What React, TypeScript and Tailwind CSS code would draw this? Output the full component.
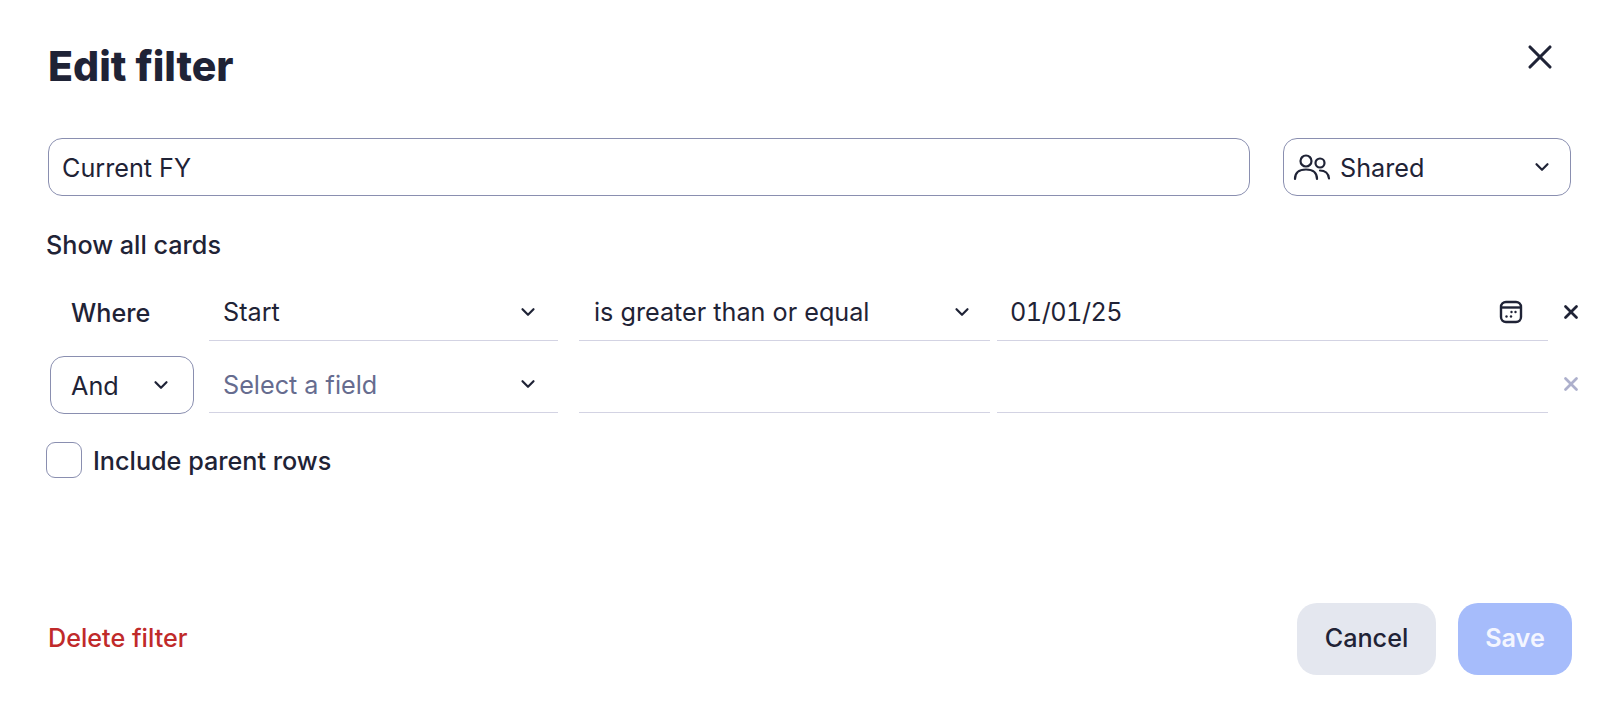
import { ChevronDown, X } from 'lucide-react'

function Chevron({ className = '' }: { className?: string }) {
  return <ChevronDown className={`w-[22px] h-[22px] text-[#1f2336] ${className}`} strokeWidth={2.4} />
}

function UsersIcon() {
  return (
    <svg className="w-[38px] h-[30px] text-[#1f2336]" viewBox="0 0 38 30" fill="none" stroke="currentColor" strokeWidth="2.200" strokeLinecap="round">
      <circle cx="13" cy="9" r="5.500" />
      <circle cx="27" cy="11" r="4.500" />
      <path d="M2 27c0-6 4-9.500 11-9.500s11 3.500 11 9.500" />
      <path d="M27 18.500c5 0 8.500 3 9 8" />
    </svg>
  )
}

function CalendarIcon() {
  return (
    <svg className="w-[24px] h-[24px] text-[#1f2336]" viewBox="0 0 24 24" fill="none" stroke="currentColor">
      <rect x="2" y="2" width="20" height="20" rx="5" strokeWidth="2.400" />
      <path d="M2 7.500h20" strokeWidth="2.400" />
      <g fill="currentColor" stroke="none">
        <circle cx="12.500" cy="12" r="1.200" />
        <circle cx="16.500" cy="12" r="1.200" />
        <circle cx="7.500" cy="16.500" r="1.200" />
        <circle cx="12" cy="16.500" r="1.200" />
      </g>
    </svg>
  )
}

function Underlined({ className, children }: { className: string; children?: React.ReactNode }) {
  return (
    <div className={`h-[58px] shrink-0 flex items-center justify-between border-b border-[#d3d3e3] text-[25.2px] leading-[32px] ${className}`}>
      {children}
    </div>
  )
}

export default function App() {
  return (
    <div className="w-[1612px] h-[704px] overflow-hidden bg-white flex flex-col pl-[48px] pr-[40px] pt-[36px] pb-[29px] text-[#1f2336] font-['Inter',sans-serif]">
      {/* Header */}
      <div className="h-[60px] flex items-center justify-between">
        <h1 className="text-[41px] leading-[60px] font-extrabold">Edit filter</h1>
        <X className="w-[40px] h-[40px] -mt-[18px] mr-[12px]" strokeWidth={1.9} />
      </div>

      {/* Name + visibility */}
      <div className="mt-[42px] flex gap-[33px]">
        <div className="w-[1202px] h-[58px] border border-[#8a8fb0] rounded-[14px] flex items-center px-[13px] pt-[1px] text-[25.2px] leading-[32px]">
          Current FY
        </div>
        <div className="w-[288px] h-[58px] border border-[#8a8fb0] rounded-[14px] flex items-center pl-[9px] pr-[17px] text-[25.2px] leading-[32px]">
          <UsersIcon />
          <span className="ml-[9px] flex-1 pt-[1px]">Shared</span>
          <Chevron />
        </div>
      </div>

      <div className="mt-[33px] -ml-[2px] text-[25.2px] leading-[32px] font-medium">Show all cards</div>

      {/* Rows */}
      <div className="mt-[22px] flex flex-col gap-[15px]">
        <div className="flex items-center">
          <div className="w-[144px] shrink-0 ml-[2px] pl-[21px] pt-[1px] text-[25.2px] leading-[32px] font-medium">Where</div>
          <Underlined className="w-[349px] ml-[15px] pl-[14px] pr-[19px]">
            <span className="pt-[1px]">Start</span>
            <Chevron />
          </Underlined>
          <Underlined className="w-[411px] ml-[21px] pl-[15px] pr-[17px]">
            <span className="pt-[1px]">is greater than or equal</span>
            <Chevron />
          </Underlined>
          <Underlined className="w-[551px] ml-[7px] pl-[13px] pr-[25px]">
            <span className="pt-[1px] tabular-nums tracking-[-0.5px]">01/01/25</span>
            <CalendarIcon />
          </Underlined>
          <X className="w-[22px] h-[22px] shrink-0 ml-[12px]" strokeWidth={3} />
        </div>
        <div className="flex items-start">
          <div className="w-[144px] shrink-0 h-[58px] ml-[2px] border border-[#8a8fb0] rounded-[14px] flex items-center justify-between pl-[20px] pr-[21px] text-[25.2px] leading-[32px]">
            <span className="pt-[1px]">And</span>
            <Chevron />
          </div>
          <Underlined className="w-[349px] !h-[57px] ml-[15px] pl-[14px] pr-[19px]">
            <span className="text-[#666c8f] pt-[1px]">Select a field</span>
            <Chevron />
          </Underlined>
          <Underlined className="w-[411px] !h-[57px] ml-[21px]" />
          <Underlined className="w-[551px] !h-[57px] ml-[7px]" />
          <X className="w-[22px] h-[22px] shrink-0 ml-[12px] mt-[17px] text-[#adb0cc]" strokeWidth={3} />
        </div>
      </div>

      <div className="mt-[28px] -ml-[2px] flex items-center gap-[11px]">
        <div className="w-[36px] h-[36px] border border-[#8a8fb0] rounded-[9px]" />
        <span className="text-[25.2px] leading-[32px] font-medium pt-[2px]">Include parent rows</span>
      </div>

      {/* Footer */}
      <div className="mt-auto flex items-center justify-between">
        <span className="text-[25.2px] font-medium text-[#c02a2a]">Delete filter</span>
        <div className="flex gap-[22px]">
          <button className="w-[139px] h-[72px] rounded-[20px] bg-[#e4e7ef] text-[25.2px] font-medium">Cancel</button>
          <button className="w-[114px] h-[72px] rounded-[20px] bg-[#a6bcfb] text-[25.2px] font-semibold text-[#f4f6ff]">Save</button>
        </div>
      </div>
    </div>
  )
}
